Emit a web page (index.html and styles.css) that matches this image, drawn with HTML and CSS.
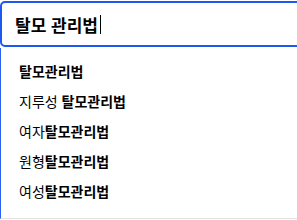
FILE: index.html
```html
<!DOCTYPE html>
<html lang="ko">
<head>
    <meta charset="UTF-8">
    <meta name="viewport" content="width=device-width, initial-scale=1.0">
    <title>검색</title>
    <link rel="stylesheet" href="styles.css">
</head>
<body>

<div class="search">
    <div class="search-box">
        <span class="query">탈모 관리법</span><span class="caret"></span>
    </div>
    <ul class="suggestions">
        <li><b>탈모관리법</b></li>
        <li>지루성 <b>탈모관리법</b></li>
        <li>여자<b>탈모관리법</b></li>
        <li>원형<b>탈모관리법</b></li>
        <li>여성<b>탈모관리법</b></li>
    </ul>
</div>

</body>
</html>
```

FILE: styles.css
```css
/* Estilos básicos */
body {
    margin: 0;
    background: #fff;
    font-family: "Noto Sans CJK KR", "Noto Sans", sans-serif;
    color: #000;
    overflow: hidden;
}
.search {
    padding-top: 1px;
}
.search-box {
    display: flex;
    align-items: center;
    height: 42px;
    margin-right: -10px;
    padding-left: 13px;
    border: 2px solid #1e58f2;
    border-radius: 5px;
    font-size: 17px;
    font-weight: bold;
}
.caret {
    width: 1px;
    height: 19px;
    margin-left: 2px;
    background: #000;
}
.suggestions {
    list-style: none;
    margin: 1px 0 0;
    padding: 8px 0 12px 18px;
    border-left: 1px solid #2a62f0;
    border-bottom: 1px solid #e2e2e2;
    font-size: 14px;
}
.suggestions li {
    height: 30px;
    line-height: 30px;
}
.suggestions b {
    font-weight: bold;
}
```
